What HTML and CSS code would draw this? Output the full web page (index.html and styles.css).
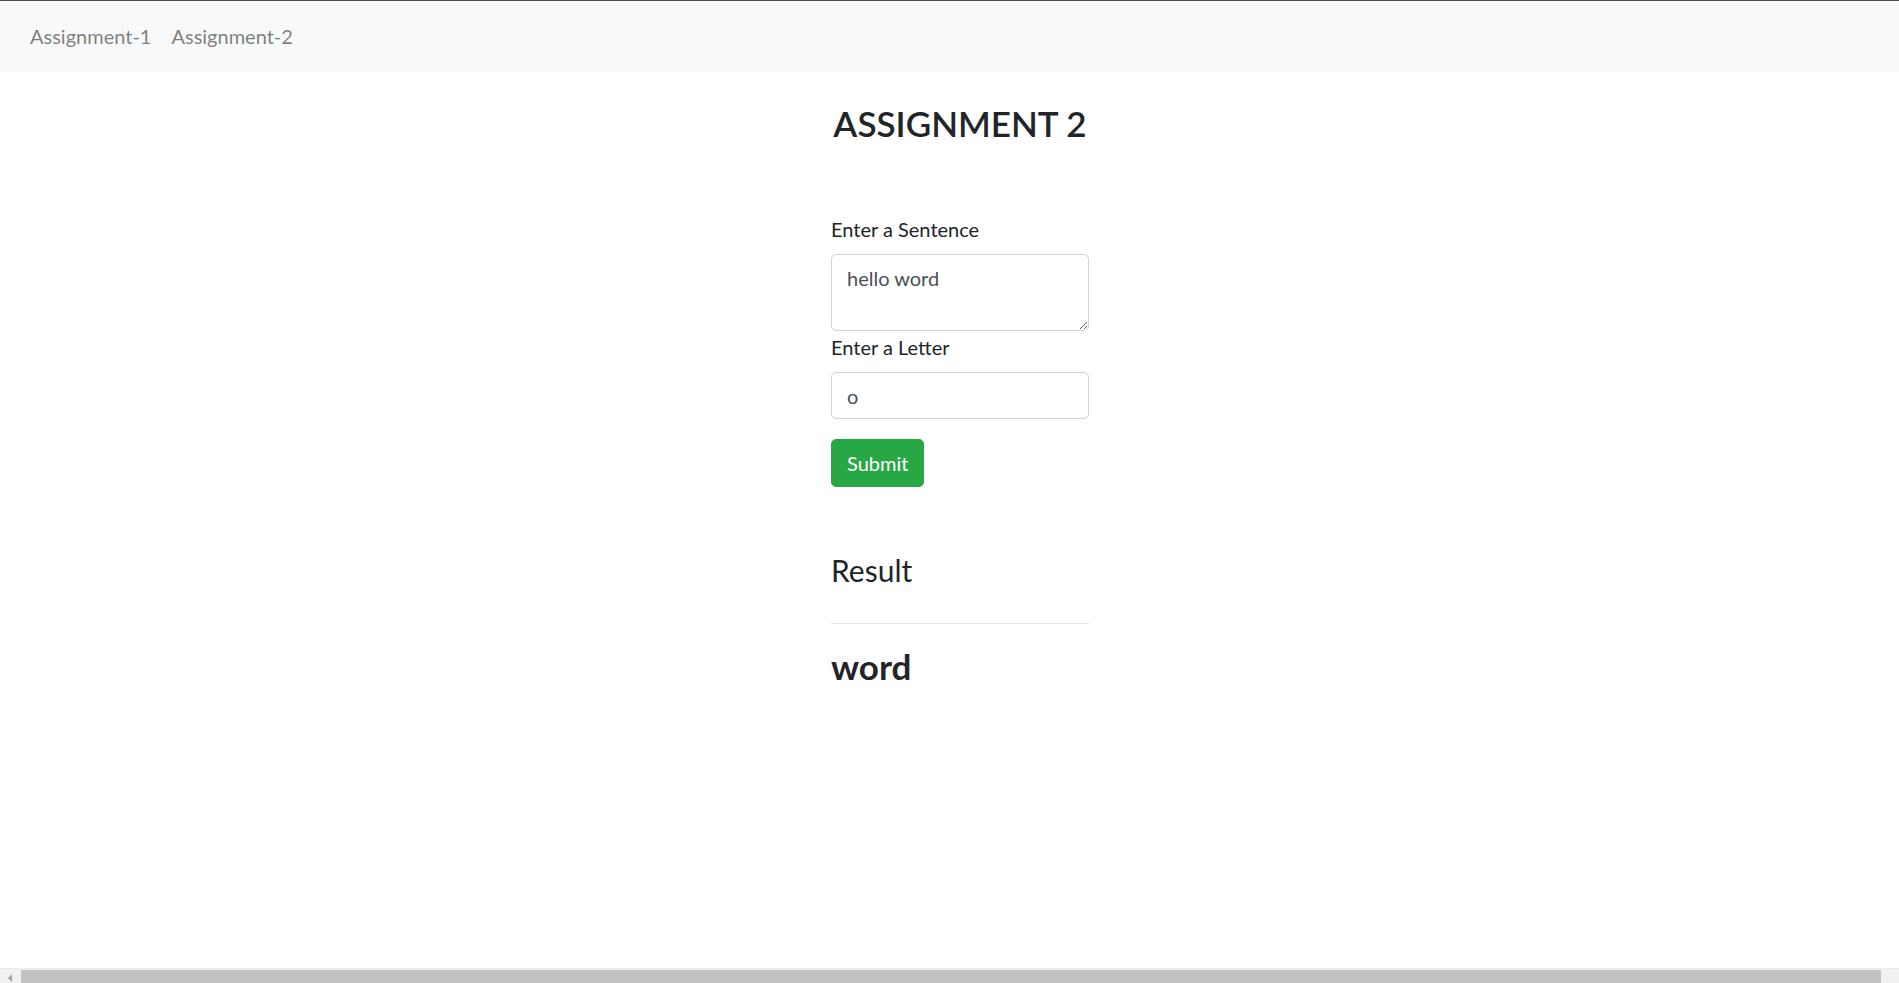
FILE: index.html
```html
<!DOCTYPE html>
<html lang="en">
<head>
<meta charset="utf-8">
<title>Assignment 2</title>
<link rel="stylesheet" href="styles.css">
</head>
<body>
<nav class="navbar">
  <a class="nav-link" href="#">Assignment-1</a>
  <a class="nav-link" href="#">Assignment-2</a>
</nav>
<main class="page">
  <h3 class="title">ASSIGNMENT 2</h3>
  <div class="column">
    <form class="form">
      <label class="label" for="sentence">Enter a Sentence</label>
      <textarea class="control area" id="sentence" rows="2">hello word</textarea>
      <label class="label second" for="letter">Enter a Letter</label>
      <input class="control input" id="letter" type="text" value="o">
      <button class="btn" type="button">Submit</button>
    </form>
    <h4 class="result-title">Result</h4>
    <hr class="rule">
    <h3 class="result">word</h3>
  </div>
</main>
<div class="hscroll">
  <span class="arrow"></span>
  <span class="thumb"></span>
</div>
</body>
</html>
```
FILE: styles.css
```css
html, body {
  margin: 0;
  padding: 0;
  overflow: hidden;
}
body {
  font-family: Lato, "Noto Sans", sans-serif;
  color: #212529;
  background: #fff;
  border-top: 1px solid #4f4f4f;
  height: 982px;
}
.navbar {
  height: 70px;
  background: #f8f9fa;
  display: flex;
  align-items: center;
  padding-left: 20px;
}
.nav-link {
  font-size: 20px;
  line-height: 30px;
  padding: 0 10px;
  color: rgba(0, 0, 0, 0.5);
  text-decoration: none;
}
.page {
  width: 1920px;
  display: flex;
  flex-direction: column;
  align-items: center;
}
.title {
  margin: 31px 0 0;
  font-size: 35px;
  line-height: 42px;
  font-weight: 600;
  text-align: center;
}
.column {
  width: 258px;
  margin-top: 70px;
}
.form {
  display: flex;
  flex-direction: column;
  align-items: flex-start;
}
.label {
  font-size: 20px;
  line-height: 30px;
  margin-bottom: 10px;
}
.label.second {
  margin-top: 1px;
}
.control {
  box-sizing: border-box;
  width: 100%;
  font-family: inherit;
  font-size: 20px;
  line-height: 30px;
  color: #495057;
  border: 1px solid #ced4da;
  border-radius: 5px;
  padding: 7.5px 15px;
  margin: 0;
  background: #fff;
}
.area {
  height: 77px;
  display: block;
  resize: vertical;
}
.input {
  height: 47px;
}
.btn {
  margin-top: 20px;
  font-family: inherit;
  font-size: 20px;
  line-height: 30px;
  color: #fff;
  background: #28a745;
  border: 1px solid #28a745;
  border-radius: 5px;
  padding: 8px 15px;
}
.result-title {
  margin: 65px 0 0;
  font-size: 30px;
  line-height: 36px;
  font-weight: 400;
}
.rule {
  margin: 35px 0 0;
  border: 0;
  border-top: 1px solid rgba(0, 0, 0, 0.1);
}
.result {
  margin: 21px 0 0;
  font-size: 35px;
  line-height: 42px;
  font-weight: 700;
}
.hscroll {
  position: fixed;
  left: 0;
  right: 0;
  bottom: 0;
  height: 14px;
  background: #f1f1f1;
  border-top: 1px solid #e9e9e9;
}
.arrow {
  position: absolute;
  left: 8px;
  top: 5px;
  width: 0;
  height: 0;
  border-top: 4px solid transparent;
  border-bottom: 4px solid transparent;
  border-right: 4px solid #a3a3a3;
}
.thumb {
  position: absolute;
  left: 21px;
  top: 1px;
  width: 1860px;
  height: 13px;
  background: #c1c1c1;
}
```
